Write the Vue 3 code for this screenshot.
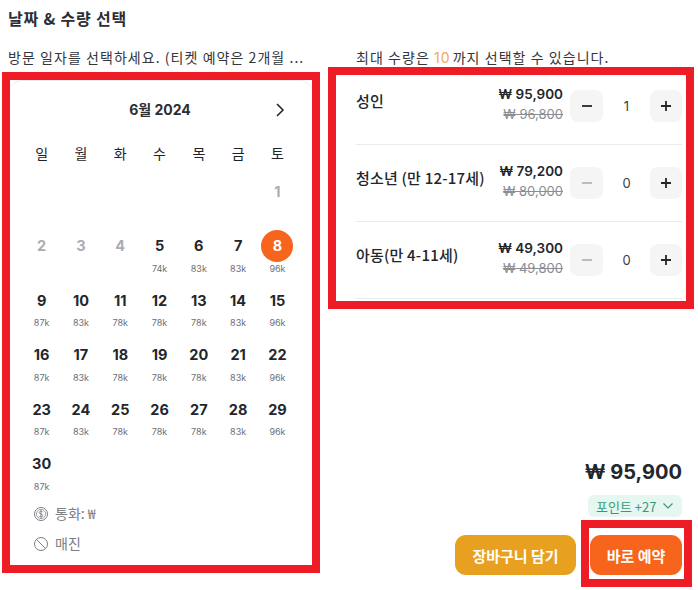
<template>
  <div class="page">
    <h2 class="title">날짜 &amp; 수량 선택</h2>
    <div class="columns">
      <section class="left">
        <p class="hint">방문 일자를 선택하세요. (티켓 예약은 2개월 ...</p>
        <div class="frame cal-frame">
          <div class="calendar">
            <div class="cal-head">
              <span class="month">6월 2024</span>
              <svg class="next" viewBox="0 0 12 16" fill="none" stroke="currentColor">
                <polyline points="3,2 9,8 3,14" />
              </svg>
            </div>
            <div class="week">
              <span v-for="w in weekdays" :key="w">{{ w }}</span>
            </div>
            <div class="days">
              <div v-for="(d, i) in days" :key="i" class="day" :class="{ off: d && d.off }">
                <template v-if="d">
                  <span class="num" :class="{ selected: d.n === selected }">{{ d.n }}</span>
                  <span class="rate">{{ d.rate }}</span>
                </template>
              </div>
            </div>
            <div class="legend">
              <div class="legend-row">
                <svg viewBox="0 0 16 16" fill="none" stroke="currentColor">
                  <circle cx="8" cy="8" r="6.5" />
                  <circle cx="8" cy="8" r="4.6" stroke-width=".7" />
                  <path d="M9.8 6.2c-.3-.7-1-1-1.8-1-1 0-1.8.5-1.8 1.4 0 1.900 3.600 1 3.600 2.900 0 .9-.8 1.400-1.800 1.400-.9 0-1.600-.4-1.900-1.100M8 4.200v7.600" stroke-width=".9" />
                </svg>
                <span>통화: ₩</span>
              </div>
              <div class="legend-row">
                <svg viewBox="0 0 16 16" fill="none" stroke="currentColor">
                  <circle cx="8" cy="8" r="6.500" />
                  <line x1="3.500" y1="3.500" x2="12.500" y2="12.500" />
                </svg>
                <span>매진</span>
              </div>
            </div>
          </div>
        </div>
      </section>

      <section class="right">
        <p class="hint limit">최대 수량은 <em>10</em>까지 선택할 수 있습니다.</p>
        <div class="frame qty-frame">
          <div v-for="t in tickets" :key="t.name" class="ticket">
            <span class="name">{{ t.name }}</span>
            <div class="price">
              <strong>₩ {{ t.price }}</strong>
              <s>₩ {{ t.list }}</s>
            </div>
            <div class="stepper">
              <button class="step" :class="{ dim: t.count === 0 }">
                <svg viewBox="0 0 12 12" stroke="currentColor"><line x1="1" y1="6" x2="11" y2="6" /></svg>
              </button>
              <span class="count">{{ t.count }}</span>
              <button class="step">
                <svg viewBox="0 0 12 12" stroke="currentColor"><path d="M1 6h10M6 1v10" /></svg>
              </button>
            </div>
          </div>
        </div>

        <div class="summary">
          <div class="total">₩ 95,900</div>
          <div class="points">
            포인트 +27
            <svg viewBox="0 0 12 8" fill="none" stroke="currentColor"><polyline points="1.500,1.500 6,6 10.500,1.500" /></svg>
          </div>
          <div class="actions">
            <button class="btn cart">장바구니 담기</button>
            <div class="frame buy-frame">
              <button class="btn buy">바로 예약</button>
            </div>
          </div>
        </div>
      </section>
    </div>
  </div>
</template>

<script setup>
import { computed, ref } from 'vue'

const weekdays = ['일', '월', '화', '수', '목', '금', '토']
const selected = ref(8)
const rates = ['87k', '83k', '78k', '78k', '78k', '83k', '96k']

const days = computed(() => {
  const list = Array(6).fill(null)
  for (let n = 1; n <= 30; n++) {
    const col = (n + 5) % 7
    const off = n < 5
    list.push({ n, off, rate: off ? '' : n < 8 ? ['74k', '83k', '83k'][n - 5] : rates[col] })
  }
  return list
})

const tickets = [
  { name: '성인', price: '95,900', list: '96,800', count: 1 },
  { name: '청소년 (만 12-17세)', price: '79,200', list: '80,000', count: 0 },
  { name: '아동(만 4-11세)', price: '49,300', list: '49,800', count: 0 }
]
</script>

<style>
html, body {
  margin: 0;
  background: #fff;
  overflow: hidden;
}
</style>

<style scoped>
.page {
  width: 698px;
  height: 590px;
  box-sizing: border-box;
  padding: 8px 0 0 8px;
  font-family: "Noto Sans CJK KR", sans-serif;
  color: #1f2228;
  overflow: hidden;
}

.title {
  margin: 0;
  font-size: 16px;
  font-weight: 600;
  letter-spacing: 0.8px;
  line-height: 20px;
  color: #2b2e33;
}

.columns {
  display: flex;
  margin-top: 19px;
}

.left {
  width: 312px;
  margin-right: 8px;
  flex: none;
}

.right {
  width: 366px;
  flex: none;
}

.hint {
  margin: 0;
  font-size: 14px;
  letter-spacing: 1.050px;
  line-height: 20px;
  white-space: nowrap;
  color: #33363b;
}

.limit {
  padding-left: 28px;
}

.limit em {
  font-style: normal;
  margin-right: 2px;
  color: #f2a65a;
  font-family: Inter, sans-serif;
}

.frame {
  box-sizing: border-box;
  border: 8px solid #ee1c25;
}

.cal-frame {
  width: 318px;
  height: 501px;
  margin: 5px 0 0 -6px;
}

.calendar {
  box-sizing: border-box;
  height: 485px;
  padding: 0 14px 0 12px;
  border-radius: 12px 12px 0 0;
  box-shadow: inset 0 1px 0 #eceef0;
}

.cal-head {
  position: relative;
  height: 57px;
  display: flex;
  align-items: center;
  justify-content: center;
}

.month {
  font-family: Inter, "Noto Sans CJK KR", sans-serif;
  font-size: 14px;
  font-weight: 700;
  color: #2b2e33;
}

.next {
  position: absolute;
  right: 12px;
  top: 22px;
  width: 12px;
  height: 16px;
  stroke-width: 1.500;
}

.week {
  display: grid;
  grid-template-columns: repeat(7, 39.300px);
  height: 32px;
  font-size: 14px;
  line-height: 32px;
  text-align: center;
}

.days {
  display: grid;
  grid-template-columns: repeat(7, 39.300px);
  grid-auto-rows: 54.600px;
  margin-top: 6px;
}

.day {
  display: flex;
  flex-direction: column;
  align-items: center;
}

.num {
  width: 32px;
  height: 32px;
  border-radius: 50%;
  display: flex;
  align-items: center;
  justify-content: center;
  font-family: Inter, sans-serif;
  font-size: 14.500px;
  font-weight: 700;
  color: #23262b;
}

.day.off .num {
  color: #aaadb1;
}

.num.selected {
  background: #f7641b;
  color: #fff;
}

.rate {
  font-family: Inter, sans-serif;
  font-size: 9px;
  line-height: 12px;
  margin-top: 1px;
  color: #6c7076;
}

.legend {
  margin-top: -4px;
  padding-left: 11px;
}

.legend-row {
  display: flex;
  align-items: center;
  gap: 6px;
  height: 29.500px;
  font-size: 14px;
  color: #7b7e83;
}

.legend-row svg {
  width: 16px;
  height: 16px;
  stroke-width: 1;
  margin-top: 2px;
}

.qty-frame {
  width: 366px;
  height: 242px;
  margin-top: -1px;
  padding: 0 4px 0 20px;
}

.ticket {
  box-sizing: border-box;
  display: flex;
  align-items: center;
  height: 77px;
  border-bottom: 1px solid #e9eaec;
}

.ticket:first-child {
  height: 70px;
  padding-bottom: 7px;
}

.name {
  flex: 1;
  font-size: 15px;
  font-weight: 500;
  letter-spacing: 0.2px;
  color: #23262b;
  white-space: nowrap;
  margin-top: -12px;
}

.price {
  display: flex;
  flex-direction: column;
  align-items: flex-end;
  margin-right: 7px;
  margin-top: -4px;
}

.price strong {
  font-family: Inter, sans-serif;
  font-size: 13.500px;
  font-weight: 600;
  line-height: 20px;
  color: #23262b;
}

.price s {
  font-family: Inter, sans-serif;
  font-size: 13px;
  line-height: 20px;
  color: #8a8d91;
}

.stepper {
  display: flex;
  align-items: center;
}

.step {
  width: 33px;
  height: 32px;
  padding: 0;
  border: none;
  border-radius: 8px;
  background: #f5f5f5;
  color: #23262b;
  display: flex;
  align-items: center;
  justify-content: center;
}

.step:last-child {
  width: 32px;
}

.step svg {
  width: 12px;
  height: 12px;
  stroke-width: 1.800;
}

.step.dim {
  color: #b4b6b9;
}

.count {
  width: 47px;
  text-align: center;
  font-family: Inter, sans-serif;
  font-size: 13px;
  color: #3a3d42;
}

.summary {
  display: flex;
  flex-direction: column;
  align-items: flex-end;
  margin-top: 150px;
}

.total {
  margin-right: 12px;
  font-family: Inter, sans-serif;
  font-size: 20px;
  font-weight: 700;
  line-height: 26px;
  color: #23262b;
}

.points {
  display: flex;
  align-items: center;
  gap: 5px;
  height: 22px;
  padding: 0 8.500px;
  margin: 10px 12px 0 0;
  border-radius: 6px;
  background: #e6f6f0;
  color: #3a9a72;
  font-size: 13px;
}

.points svg {
  width: 12px;
  height: 8px;
  stroke-width: 1.200;
}

.actions {
  display: flex;
  gap: 5px;
  margin: 3px 2px 0 0;
}

.btn {
  height: 40px;
  border: none;
  border-radius: 11px;
  color: #fff;
  font-family: "Noto Sans CJK KR", sans-serif;
  font-size: 15px;
  font-weight: 700;
  padding: 0;
}

.cart {
  width: 121px;
  margin-top: 15px;
  background: #e8a020;
}

.buy-frame {
  width: 111px;
  height: 67px;
  padding: 7px 2px 4px 1px;
}

.buy {
  display: block;
  width: 92px;
  background: #f7641b;
}
</style>
